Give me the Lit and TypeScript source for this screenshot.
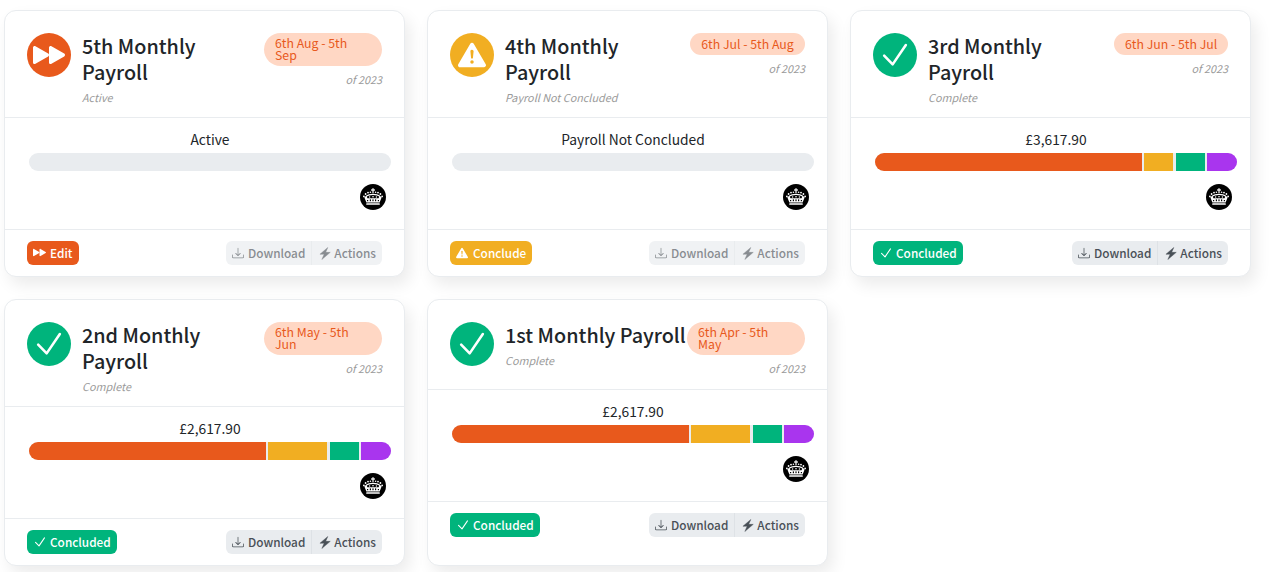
import { LitElement, html, css, svg } from "lit";
import { customElement } from "lit/decorators.js";

const CHECK = svg`<path d="M2.9 8.3 6.9 12.4 13.1 3.3" fill="none" stroke="currentColor" stroke-width="1.2" stroke-linecap="round" stroke-linejoin="round"/>`;
const FF = svg`<path d="M7.596 7.304a.802.802 0 0 1 0 1.392l-6.363 3.692C.713 12.69 0 12.345 0 11.692V4.308c0-.653.713-.998 1.233-.696l6.363 3.692Z"/><path d="M15.596 7.304a.802.802 0 0 1 0 1.392l-6.363 3.692C8.713 12.69 8 12.345 8 11.692V4.308c0-.653.713-.998 1.233-.696l6.363 3.692Z"/>`;
const WARN = svg`<path d="M8.982 1.566a1.13 1.13 0 0 0-1.96 0L.165 13.233c-.457.778.091 1.767.98 1.767h13.713c.889 0 1.438-.99.98-1.767L8.982 1.566zM8 5c.535 0 .954.462.9.995l-.35 3.507a.552.552 0 0 1-1.1 0L7.1 5.995A.905.905 0 0 1 8 5zm.002 6a1 1 0 1 1 0 2 1 1 0 0 1 0-2z"/>`;
const DOWNLOAD = svg`<path d="M.5 9.9a.5.5 0 0 1 .5.5v2.5a1 1 0 0 0 1 1h12a1 1 0 0 0 1-1v-2.5a.5.5 0 0 1 1 0v2.5a2 2 0 0 1-2 2H2a2 2 0 0 1-2-2v-2.5a.5.5 0 0 1 .5-.5z"/><path d="M7.646 11.854a.5.5 0 0 0 .708 0l3-3a.5.5 0 0 0-.708-.708L8.5 10.293V1.5a.5.5 0 0 0-1 0v8.793L5.354 8.146a.5.5 0 1 0-.708.708l3 3z"/>`;
const BOLT = svg`<path d="M11.2.6 2.2 8.9H7L4.4 15.4 14 6.6H8.8Z" stroke="currentColor" stroke-width=".5" stroke-linejoin="round"/>`;

const icon = (p: unknown, size: number) =>
  html`<svg width=${size} height=${size} viewBox="0 0 16 16" fill="currentColor">${p}</svg>`;

const boltIcon = html`<svg width="14" height="13" viewBox="0 0 16 16" preserveAspectRatio="none" fill="currentColor">${BOLT}</svg>`;

const crown = html`<svg class="crown" width="26" height="26" viewBox="0 0 26 26">
  <circle cx="13" cy="13" r="13" fill="#000" />
  <g fill="#fff">
    <rect x="12.4" y="4.2" width="1.2" height="5" />
    <rect x="11" y="5.4" width="4" height="1.2" />
    <circle cx="3.9" cy="12.4" r=".9" />
    <circle cx="5.6" cy="10" r=".9" />
    <circle cx="8" cy="8.6" r=".9" />
    <circle cx="10.4" cy="8.3" r=".8" />
    <circle cx="15.6" cy="8.3" r=".8" />
    <circle cx="18" cy="8.6" r=".9" />
    <circle cx="20.4" cy="10" r=".9" />
    <circle cx="22.1" cy="12.4" r=".9" />
    <path d="M4.4 13.4 6.6 11.2 9 10.2 13 9.7 17 10.2 19.4 11.2 21.6 13.4 19.6 18.4H6.4Z" />
    <rect x="6.2" y="19.2" width="13.6" height="1.6" rx=".6" />
  </g>
  <g fill="#000">
    <path d="M6.8 12.4 9.2 11.4 13 11 16.8 11.4 19.2 12.4 18.6 14.2H7.4Z" />
    <rect x="7" y="16" width="1.2" height="1.2" />
    <rect x="9.8" y="15.4" width="1.2" height="1.8" />
    <rect x="12.4" y="15.4" width="1.2" height="1.8" />
    <rect x="15" y="15.4" width="1.2" height="1.8" />
    <rect x="17.8" y="16" width="1.2" height="1.2" />
  </g>
  <g fill="#fff">
    <circle cx="9.6" cy="13" r=".7" />
    <circle cx="13" cy="12.7" r=".8" />
    <circle cx="16.4" cy="13" r=".7" />
  </g>
</svg>`;

type Card = {
  title: string;
  sub: string;
  range: string;
  badgeW: number;
  kind: "active" | "warn" | "done";
  label: string;
  oneLine?: boolean;
  singlePill?: boolean;
  segs?: [number, number][];
};

const COLORS = ["#e8591c", "#f1ae22", "#00b47c", "#a935ee"];

const CARDS: Card[] = [
  { title: "5th Monthly Payroll", sub: "Active", range: "6th Aug - 5th Sep", badgeW: 118, kind: "active", label: "Active" },
  { title: "4th Monthly Payroll", sub: "Payroll Not Concluded", range: "6th Jul - 5th Aug", badgeW: 115, singlePill: true, kind: "warn", label: "Payroll Not Concluded" },
  { title: "3rd Monthly Payroll", sub: "Complete", range: "6th Jun - 5th Jul", badgeW: 114, singlePill: true, kind: "done", label: "£3,617.90", segs: [[267, 2], [29, 3], [29, 2], [30, 0]] },
  { title: "2nd Monthly Payroll", sub: "Complete", range: "6th May - 5th Jun", badgeW: 118, kind: "done", label: "£2,617.90", segs: [[237, 2], [59, 3], [29, 2], [30, 0]] },
  { title: "1st Monthly Payroll", sub: "Complete", range: "6th Apr - 5th May", badgeW: 118, oneLine: true, kind: "done", label: "£2,617.90", segs: [[237, 2], [59, 3], [29, 2], [30, 0]] },
];

@customElement("app-root")
export class AppRoot extends LitElement {
  static styles = css`
    :host {
      display: block;
      font-family: "Noto Sans CJK JP", "Noto Sans", sans-serif;
      color: #212529;
      background: #fff;
      height: 572px;
      overflow: hidden;
    }
    .grid {
      display: grid;
      grid-template-columns: repeat(3, 401px);
      column-gap: 22px;
      row-gap: 22px;
      padding: 10px 0 0 4px;
    }
    .card {
      display: flex;
      flex-direction: column;
      box-sizing: border-box;
      background: #fff;
      border: 1px solid #e9ecef;
      border-radius: 12px;
      box-shadow: 5px 8px 16px rgba(0, 0, 0, 0.08);
    }
    .head {
      display: flex;
      padding: 22px 22px 11px 22px;
      border-bottom: 1px solid #e9ecef;
    }
    .disc {
      flex: none;
      width: 44px;
      height: 44px;
      border-radius: 50%;
      color: #fff;
      display: flex;
      align-items: center;
      justify-content: center;
      margin-right: 11px;
    }
    .active { background: #e8591c; }
    .warn { background: #f1ae22; }
    .done { background: #00b47c; }
    .titles { flex: 1; min-width: 0; }
    .title {
      font-size: 19.8px;
      line-height: 26px;
      font-weight: 500;
      max-width: 140px;
    }
    .title.one { max-width: none; white-space: nowrap; }
    .sub {
      font-size: 10.8px;
      line-height: 18px;
      font-style: italic;
      color: #9a9a9a;
      margin-top: 3px;
    }
    .range { flex: none; display: flex; flex-direction: column; align-items: flex-end; }
    .pill {
      box-sizing: border-box;
      width: 100%;
      padding: 5px 11px;
      border-radius: 17px;
      background: #ffd7c4;
      color: #e8591c;
      font-size: 12.3px;
      line-height: 11.5px;
    }
    .single { line-height: 12px; text-align: center; white-space: nowrap; }
    .year {
      font-size: 10.8px;
      line-height: 19px;
      font-style: italic;
      color: #9a9a9a;
      margin-top: 4px;
    }
    .body {
      padding: 11px 13px 19px 24px;
      border-bottom: 1px solid #e9ecef;
      display: flex;
      flex-direction: column;
    }
    .label {
      font-size: 13.8px;
      line-height: 21px;
      text-align: center;
      margin-bottom: 3px;
    }
    .bar {
      display: flex;
      height: 18px;
      border-radius: 9px;
      background: #e9ecef;
      overflow: hidden;
    }
    .seg { height: 100%; }
    .crown { align-self: flex-end; margin: 13px 5px 0 0; display: block; }
    .foot {
      display: flex;
      justify-content: space-between;
      align-items: center;
      padding: 11px 22px 11px 22px;
    }
    .btn {
      display: inline-flex;
      align-items: center;
      gap: 3px;
      height: 24px;
      box-sizing: border-box;
      padding: 0 6px 1px;
      border-radius: 6px;
      color: #fff;
      font-size: 11.8px;
      font-weight: 500;
      line-height: 23px;
    }
    .btn.active { gap: 4px; padding-right: 7px; }
    .btn.warn { gap: 5px; }
    .group {
      display: inline-flex;
      height: 24px;
      border-radius: 6px;
      background: #e9ecef;
      color: #495057;
      font-size: 11.8px;
      font-weight: 500;
    }
    .group.off { opacity: 0.65; }
    .item {
      display: inline-flex;
      align-items: center;
      gap: 4px;
      padding: 0 6px 2px;
    }
    .item svg { position: relative; top: 1px; }
    .item.act { gap: 2px; }
    .item + .item { border-left: 1px solid #dee2e6; }
  `;

  private statusBtn(c: Card) {
    if (c.kind === "active") return html`<span class="btn active">${icon(FF, 13)}Edit</span>`;
    if (c.kind === "warn") return html`<span class="btn warn">${icon(WARN, 12)}Conclude</span>`;
    return html`<span class="btn done">${icon(CHECK, 14)}Concluded</span>`;
  }

  private discIcon(c: Card) {
    if (c.kind === "active") return icon(FF, 32);
    if (c.kind === "warn") return icon(WARN, 28);
    return icon(CHECK, 34);
  }

  render() {
    return html`<div class="grid">
      ${CARDS.map(
        (c) => html`<article class="card">
          <header class="head">
            <div class="disc ${c.kind}">${this.discIcon(c)}</div>
            <div class="titles">
              <div class="title ${c.oneLine ? "one" : ""}">${c.title}</div>
              <div class="sub">${c.sub}</div>
            </div>
            <div class="range" style="width:${c.badgeW}px">
              <div class="pill ${c.singlePill ? "single" : ""}">${c.range}</div>
              <div class="year">of 2023</div>
            </div>
          </header>
          <div class="body">
            <div class="label">${c.label}</div>
            <div class="bar">
              ${(c.segs ?? []).map(
                (s, i) => html`<div class="seg" style="width:${s[0]}px;margin-right:${s[1]}px;background:${COLORS[i]}"></div>`
              )}
            </div>
            ${crown}
          </div>
          <footer class="foot">
            ${this.statusBtn(c)}
            <span class="group ${c.kind === "done" ? "" : "off"}">
              <span class="item">${icon(DOWNLOAD, 12)}Download</span>
              <span class="item act">${boltIcon}Actions</span>
            </span>
          </footer>
        </article>`
      )}
    </div>`;
  }
}
